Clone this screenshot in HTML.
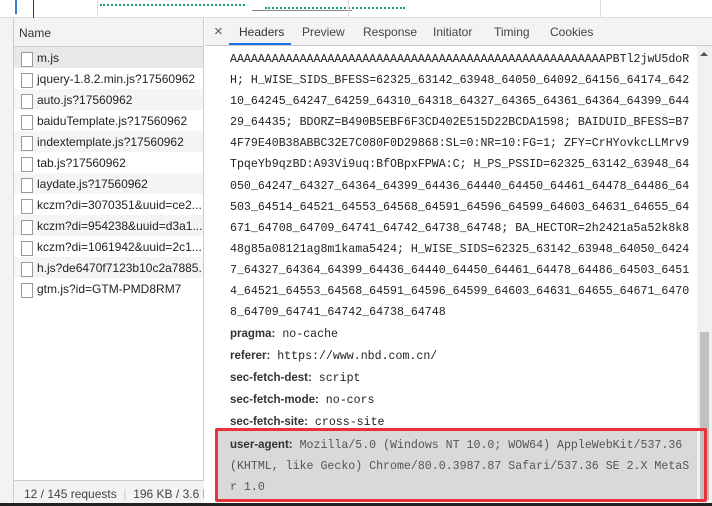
<!DOCTYPE html>
<html><head><meta charset="utf-8"><style>
*{margin:0;padding:0;box-sizing:border-box}
body{width:712px;height:506px;overflow:hidden;background:#fff;font-family:"Liberation Sans",sans-serif;position:relative;color:#222}
.top{position:absolute;left:0;top:0;width:712px;height:18px;background:#fff;border-bottom:1px solid #ddd}
.lstrip{position:absolute;left:0;top:18px;width:14px;height:488px;background:#f3f3f3;border-right:1px solid #ccc}
.left{position:absolute;left:14px;top:18px;width:190px;height:488px;background:#fff;border-right:1px solid #ccc}
.nh{height:29px;border-bottom:1px solid #ccc;background:#f3f3f3;font-size:12px;line-height:31px;padding-left:5px;color:#333}
.row{height:21px;font-size:12px;line-height:23px;padding-left:23px;position:relative;color:#222;white-space:nowrap;overflow:hidden}
.row.sel{background:#e8e8e8}
.row:before{content:"";position:absolute;left:7px;top:5px;width:10px;height:13px;border:1px solid #999;background:#fff}
.status{position:absolute;left:0;bottom:0;width:190px;height:26px;border-top:1px solid #ccc;background:#f3f3f3;font-size:12px;line-height:26px;padding-left:10px;color:#444;white-space:nowrap;overflow:hidden}
.tabs{position:absolute;left:205px;top:18px;width:507px;height:28px;background:#f3f3f3;border-bottom:1px solid #ccc;font-size:12px;color:#444}
.tabs span{position:absolute;top:7px}
.ul{position:absolute;left:229px;top:43px;width:62px;height:2px;background:#1a73e8}
.content{position:absolute;left:205px;top:46px;width:492px;height:460px;font-family:"Liberation Mono",monospace;font-size:11.6px;color:#222}
.l{position:absolute;left:25px;white-space:pre;height:22px;line-height:22px}
.k{font-family:"Liberation Sans",sans-serif;font-weight:bold;font-size:11.5px;color:#333}
.sb{position:absolute;left:697px;top:46px;width:15px;height:460px;background:#f1f1f1}
.thumb{position:absolute;left:697px;top:332px;width:15px;height:168px;background:#c1c1c1;border:3px solid #f1f1f1;border-top:0;border-bottom:0}
.selbg{position:absolute;left:217px;top:430px;width:480px;height:70px;background:#d9d9d9}
.red{position:absolute;left:215px;top:428px;width:492px;height:74px;border:3px solid #e8323a;border-radius:2px}
.bot{position:absolute;left:0;top:503px;width:712px;height:3px;background:#222}
</style></head><body>
<div class="top">
<div style="position:absolute;left:15px;top:0;width:2px;height:14px;background:#3a7bd5"></div>
<div style="position:absolute;left:33px;top:0;width:1px;height:18px;background:#6b1f2b"></div>
<div style="position:absolute;left:97px;top:0;width:1px;height:18px;background:#ddd"></div>
<div style="position:absolute;left:100px;top:4px;width:145px;height:1px;border-top:2px dotted #1aa37a"></div>
<div style="position:absolute;left:265px;top:7px;width:140px;border-top:2px dotted #1aa37a"></div>
<div style="position:absolute;left:252px;top:10px;width:100px;height:1px;background:#888"></div>
<div style="position:absolute;left:348px;top:0;width:1px;height:18px;background:#ddd"></div>
<div style="position:absolute;left:600px;top:0;width:1px;height:18px;background:#ddd"></div>
</div>
<div class="lstrip"></div>
<div class="left">
<div class="nh">Name</div>
<div>
<div class="row sel">m.js</div>
<div class="row" style="background:#fff">jquery-1.8.2.min.js?17560962</div>
<div class="row" style="background:#f5f5f5">auto.js?17560962</div>
<div class="row" style="background:#fff">baiduTemplate.js?17560962</div>
<div class="row" style="background:#f5f5f5">indextemplate.js?17560962</div>
<div class="row" style="background:#fff">tab.js?17560962</div>
<div class="row" style="background:#f5f5f5">laydate.js?17560962</div>
<div class="row" style="background:#fff">kczm?di=3070351&amp;uuid=ce2...</div>
<div class="row" style="background:#f5f5f5">kczm?di=954238&amp;uuid=d3a1...</div>
<div class="row" style="background:#fff">kczm?di=1061942&amp;uuid=2c1...</div>
<div class="row" style="background:#f5f5f5">h.js?de6470f7123b10c2a7885...</div>
<div class="row" style="background:#fff">gtm.js?id=GTM-PMD8RM7</div>
</div>
<div class="status">12 / 145 requests &nbsp;<span style="color:#ccc">|</span>&nbsp; 196 KB / 3.6 MB</div>
</div>
<div class="tabs">
<span style="left:9px;top:5px;font-size:15px;color:#555">×</span>
<span style="left:34px;color:#333">Headers</span>
<span style="left:97px">Preview</span>
<span style="left:158px">Response</span>
<span style="left:228px">Initiator</span>
<span style="left:289px">Timing</span>
<span style="left:345px">Cookies</span>
</div>
<div class="ul"></div>
<div class="sb"></div>
<div style="position:absolute;left:700px;top:52px;width:0;height:0;border-left:4px solid transparent;border-right:4px solid transparent;border-bottom:4px solid #555"></div>
<div class="thumb"></div>
<div class="selbg"></div>
<div class="content">
<div class="l" style="top:3px">AAAAAAAAAAAAAAAAAAAAAAAAAAAAAAAAAAAAAAAAAAAAAAAAAAAAAAPBTl2jwU5doR</div>
<div class="l" style="top:24px">H; H_WISE_SIDS_BFESS=62325_63142_63948_64050_64092_64156_64174_642</div>
<div class="l" style="top:45px">10_64245_64247_64259_64310_64318_64327_64365_64361_64364_64399_644</div>
<div class="l" style="top:66px">29_64435; BDORZ=B490B5EBF6F3CD402E515D22BCDA1598; BAIDUID_BFESS=B7</div>
<div class="l" style="top:87px">4F79E40B38ABBC32E7C080F0D29868:SL=0:NR=10:FG=1; ZFY=CrHYovkcLLMrv9</div>
<div class="l" style="top:108px">TpqeYb9qzBD:A93Vi9uq:BfOBpxFPWA:C; H_PS_PSSID=62325_63142_63948_64</div>
<div class="l" style="top:130px">050_64247_64327_64364_64399_64436_64440_64450_64461_64478_64486_64</div>
<div class="l" style="top:151px">503_64514_64521_64553_64568_64591_64596_64599_64603_64631_64655_64</div>
<div class="l" style="top:172px">671_64708_64709_64741_64742_64738_64748; BA_HECTOR=2h2421a5a52k8k8</div>
<div class="l" style="top:193px">48g85a08121ag8m1kama5424; H_WISE_SIDS=62325_63142_63948_64050_6424</div>
<div class="l" style="top:214px">7_64327_64364_64399_64436_64440_64450_64461_64478_64486_64503_6451</div>
<div class="l" style="top:235px">4_64521_64553_64568_64591_64596_64599_64603_64631_64655_64671_6470</div>
<div class="l" style="top:256px">8_64709_64741_64742_64738_64748</div>
<div class="l" style="top:277px"><span class="k">pragma:</span> no-cache</div>
<div class="l" style="top:299px"><span class="k">referer:</span> https://www.nbd.com.cn/</div>
<div class="l" style="top:321px"><span class="k">sec-fetch-dest:</span> script</div>
<div class="l" style="top:343px"><span class="k">sec-fetch-mode:</span> no-cors</div>
<div class="l" style="top:365px"><span class="k">sec-fetch-site:</span> cross-site</div>
<div class="l" style="top:388px;color:#555"><span class="k">user-agent:</span> Mozilla/5.0 (Windows NT 10.0; WOW64) AppleWebKit/537.36</div>
<div class="l" style="top:410px;color:#555">(KHTML, like Gecko) Chrome/80.0.3987.87 Safari/537.36 SE 2.X MetaS</div>
<div class="l" style="top:431px;color:#555">r 1.0</div>
</div>
<div class="red"></div>
<div class="bot"></div>
</body></html>
